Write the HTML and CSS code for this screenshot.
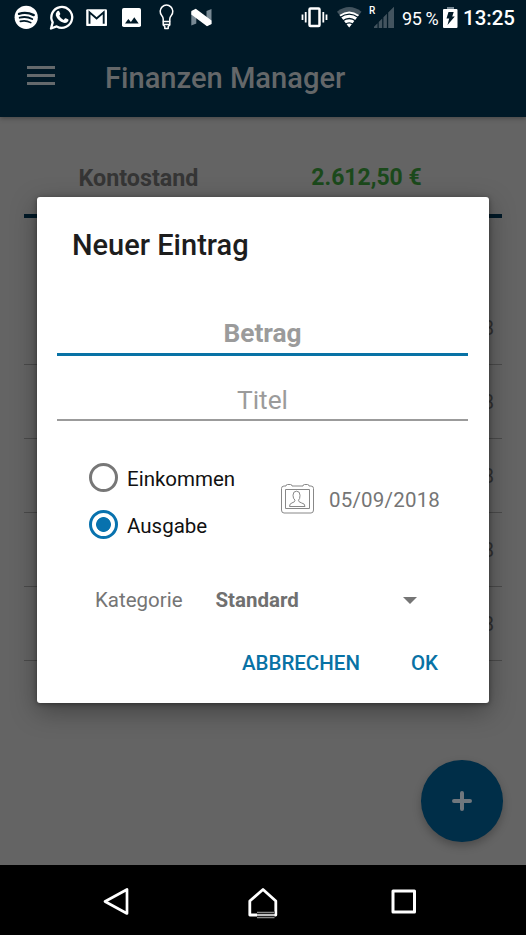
FILE: index.html
```html
<!DOCTYPE html>
<html lang="de">
<head>
<meta charset="utf-8">
<title>Finanzen Manager</title>
<link rel="stylesheet" href="styles.css">
</head>
<body>
<div class="screen">
  <header class="top">
    <div class="status">
      <svg class="notifications" width="220" height="36" viewBox="0 0 220 36">
        <circle cx="26.200" cy="17.300" r="11.600" fill="#fff"/>
        <g fill="none" stroke="#001927" stroke-linecap="round">
          <path d="M19 13.800q7.500-2.300 14.800 1.300" stroke-width="2.300"/>
          <path d="M19.700 17.700q6.500-1.800 12.500 1.300" stroke-width="1.900"/>
          <path d="M20.300 21.400q5.500-1.400 10.500 1.200" stroke-width="1.600"/>
        </g>
        <path d="M51 28.500l1.700-6.100a10.400 10.400 0 1 1 4 4z" fill="none" stroke="#fff" stroke-width="2.300" stroke-linejoin="round"/>
        <path d="M57 11.500q1.500-1.500 2.300 0l1 2.300q.2.700-1 1.900 1.400 3 4.300 4.200l1.500-1.600q.6-.3 2.900.9.800.4.300 1.700-1.500 2.600-4.500 1.900-6-1.800-8-7.300-.5-2.200 1.200-4z" fill="#fff"/>
        <rect x="86.200" y="9.300" width="20.800" height="16.800" rx="1.200" fill="#fff"/>
        <path d="M89.500 23.800V12.300l7.100 6.200 7.100-6.200v11.500" fill="none" stroke="#001927" stroke-width="1.900"/>
        <rect x="122" y="8" width="19" height="19" rx="1.800" fill="#fff"/>
        <path d="M125 23.500l3.300-4.500 2.600 3 3.400-4.700 4.400 6.200z" fill="#001927"/>
        <g fill="none" stroke="#fff" stroke-width="1.500" stroke-linejoin="round">
          <path d="M163.200 21.500v-2.500q0-1.700-1.500-3.500a6.300 6.300 0 1 1 9.600 0q-1.500 1.800-1.500 3.500v2.500z"/>
          <path d="M163.200 21.500v3.500l1.600 1.500v2h3.400v-2l1.600-1.500v-3.500M163.500 24.500h6"/>
        </g>
        <path d="M191.300 12l5 2v9.500l-5 2zM206.500 11l5-2v15l-5 2z" fill="#788994"/>
        <path d="M191.300 11l4.500-2.200 15.700 11.700v3.500l-4.500 2.200-15.700-11.700z" fill="#fff"/>
      </svg>
      <svg class="indicators" width="100" height="36" viewBox="300 0 100 36">
        <rect x="309.500" y="8.600" width="10" height="17.400" rx="1" fill="none" stroke="#fff" stroke-width="2.500"/>
        <path d="M305.700 12v10.500M302.500 14.500v5.500M323.300 12v10.500M326.500 14.500v5.500" stroke="#fff" stroke-width="1.800"/>
        <path d="M349.200 27.500L337 11.700Q349.200 2.500 361.500 11.700z" fill="#43545f"/>
        <path d="M349.200 27.500L339.500 15Q349.200 7.800 359 15z" fill="#fff"/>
        <path d="M340 17.600q9.200-7 18.400 0M342.600 21q6.600-5 13.200 0M345.300 24.300q3.900-3 7.800 0" fill="none" stroke="#001927" stroke-width="1.300"/>
        <text x="369" y="14" class="roaming">R</text>
        <path d="M374 28v-1.200l3.500-3.500V28zM378.700 28v-6l3.500-3.500V28zM383.400 28V17.300l3.500-3.500V28zM388.200 28V12.500l5.800-5.800V28z" fill="#43545f"/>
      </svg>
      <span class="percent">95 %</span>
      <svg class="battery" width="15" height="22" viewBox="0 0 15 22">
        <path d="M4 0h7v3H4z" fill="#788994"/><rect y="2" width="14.500" height="19" rx="1" fill="#fff"/>
        <path d="M5.500 5h5.200L9.200 9.400h2.600L4.500 18l1.700-6.500H3.500z" fill="#001927"/>
      </svg>
      <time class="clock">13:25</time>
    </div>
    <div class="toolbar">
      <div class="menu"><i></i><i></i><i></i></div>
      <h1>Finanzen Manager</h1>
    </div>
  </header>
  <main class="content">
    <div class="balance"><span>Kontostand</span><span class="amount">2.612,50 €</span></div>
    <div class="entries">
      <div class="entry">05/09/2018</div>
      <div class="entry">05/09/2018</div>
      <div class="entry">05/09/2018</div>
      <div class="entry">05/09/2018</div>
      <div class="entry">05/09/2018</div>
    </div>
  </main>
  <nav class="navbar">
    <svg width="27" height="30" viewBox="0 0 27 30"><path d="M2 14.500L24 2.500v24z" fill="none" stroke="#fff" stroke-width="2.700" stroke-linejoin="round"/></svg>
    <svg class="home" width="30" height="32" viewBox="0 0 30 32"><path d="M1.800 28v-14L15 2.500l12.800 11.500v14z" fill="none" stroke="#fff" stroke-width="2.800" stroke-linejoin="round"/><path d="M9 24.500h17.500v7.500H9z" fill="#000"/><path d="M9 25.500h17.500M9 30.500h17.500" stroke="#888" stroke-width="1.600"/><path d="M9 28h19" stroke="#fff" stroke-width="1.500"/></svg>
    <svg width="26" height="26" viewBox="0 0 26 26"><rect x="2" y="2" width="21.500" height="21" fill="none" stroke="#fff" stroke-width="3" stroke-linejoin="round"/></svg>
  </nav>
  <div class="fab"><svg width="20" height="20" viewBox="0 0 20 20"><path d="M10 2v16M2 10h16" stroke="#70777d" stroke-width="4" stroke-linecap="round"/></svg></div>
  <section class="dialog">
    <h2>Neuer Eintrag</h2>
    <div class="field focused">Betrag</div>
    <div class="field">Titel</div>
    <div class="options">
      <div class="radios">
        <div class="radio"><i></i><span>Einkommen</span></div>
        <div class="radio checked"><i></i><span>Ausgabe</span></div>
      </div>
      <div class="date">
        <svg width="34" height="30" viewBox="0 0 34 30" fill="none" stroke="#888" stroke-width="1">
          <path d="M3 2h2q0-1.500 1.500-1.500h3q1.500 0 1.500 1.500h11q0-1.500 1.500-1.500h3q1.500 0 1.500 1.500h2q2.500 0 2.500 2.500V26q0 3-2.500 3H3Q.5 29 .5 26V4.500Q.5 2 3 2z"/>
          <path d="M4.500 5.500h24v19h-24z"/>
          <path d="M8.500 22.500q0-3 2.500-3.600 3-.7 3-2.700-2-1.500-2-5 0-4 3.500-4t3.500 4-1.500 5q0 2 3 2.700 3.500.6 3.500 3.600z"/>
        </svg>
        <span>05/09/2018</span>
      </div>
    </div>
    <div class="category">
      <span class="label">Kategorie</span><strong>Standard</strong><i class="caret"></i>
    </div>
    <div class="actions"><span>ABBRECHEN</span><span>OK</span></div>
  </section>
</div>
</body>
</html>
```
FILE: styles.css
```css
* { box-sizing: border-box; }
body { margin: 0; font-family: Roboto, "Liberation Sans", sans-serif; }
h1, h2 { margin: 0; font-weight: 500; white-space: nowrap; }
svg { display: block; flex: none; }

.screen {
  position: relative;
  width: 526px;
  height: 935px;
  display: flex;
  flex-direction: column;
  background: #646464;
  overflow: hidden;
}

.top { height: 117px; background: #001927; box-shadow: 0 1px 5px rgba(0, 0, 0, .35); }
.status { height: 36px; display: flex; align-items: center; color: #fff; white-space: nowrap; }
.indicators { margin-left: 80px; }
.roaming { font: 500 10px Roboto, sans-serif; fill: #fff; }
.percent { width: 41px; margin-left: 2px; font-size: 18px; letter-spacing: -.4px; }
.battery { margin-top: -1px; }
.clock { margin-left: 5px; font-size: 20.500px; font-weight: 500; }

.toolbar { height: 81px; display: flex; align-items: center; padding: 2px 0 0 27px; gap: 50px; }
.menu { display: grid; gap: 5px; width: 28px; padding-bottom: 4px; }
.menu i { height: 3px; background: #64696c; }
.toolbar h1 { font-size: 29.100px; color: #646769; }

.content { flex: 1; padding: 0 24px; }
.balance {
  height: 101px;
  padding-top: 46px;
  display: grid;
  grid-template-columns: 1fr 1fr;
  text-align: center;
  font-size: 23.300px;
  font-weight: 700;
  line-height: 30px;
  color: #353535;
  border-bottom: 4px solid #001927;
}
.balance > span { padding-right: 10px; }
.balance .amount { font-size: 23px; color: #1b491b; padding-right: 32px; }
.entries { padding-top: 73px; }
.entry {
  height: 74px;
  padding-right: 8px;
  text-align: right;
  font-size: 20px;
  line-height: 75px;
  color: #333;
  border-bottom: 1px solid #4b4b4b;
}

.navbar {
  height: 70px;
  display: flex;
  justify-content: space-between;
  align-items: center;
  padding: 4px 109px 0 103px;
  background: #000;
}
.home { margin: 1px -2px 0 2px; }

.fab {
  position: absolute;
  left: 421px;
  top: 760px;
  width: 81.500px;
  height: 81.500px;
  border-radius: 50%;
  display: grid;
  place-items: center;
  background: #002e48;
  box-shadow: 0 4px 9px rgba(0, 0, 0, .25);
}

.dialog {
  position: absolute;
  left: 36.500px;
  top: 197px;
  width: 452.500px;
  height: 506px;
  padding: 30px 21px 0 20.500px;
  border-radius: 3px;
  background: #fff;
  box-shadow: 0 8px 26px rgba(0, 0, 0, .34), 0 1px 5px rgba(0, 0, 0, .4);
}
.dialog h2 { height: 82px; padding-left: 15px; font-size: 29px; line-height: 36px; color: #1d1d1d; }
.field {
  height: 65px;
  padding-top: 28px;
  font-size: 26.300px;
  line-height: 32px;
  text-align: center;
  color: #9b9b9b;
  border-bottom: 2px solid #9b9b9b;
}
.focused { height: 47px; padding-top: 8px; font-weight: 700; border-bottom: 3px solid #0872a5; }

.options { height: 152px; display: flex; padding: 42px 0 0 32px; }
.radios { width: 192px; }
.radio { height: 47px; display: flex; align-items: flex-start; gap: 9px; font-size: 20.500px; line-height: 32px; color: #111; }
.radio i { width: 29px; height: 29px; border: 3px solid #777; border-radius: 50%; }
.checked i { border-color: #0872ae; background: radial-gradient(circle, #0872ae 7px, #fff 7.800px); }
.date { height: 30px; margin-top: 21px; display: flex; align-items: center; gap: 14px; font-size: 20.500px; line-height: 30px; letter-spacing: .2px; color: #757575; }
.date span { padding-top: 1px; }

.category { height: 54px; display: flex; align-items: center; padding: 0 51px 0 38px; font-size: 20.500px; color: #757575; }
.label { width: 120.500px; }
.category strong { flex: 1; font-weight: 700; color: #707070; }
.caret { border: 7.500px solid transparent; border-top-color: #757575; border-bottom: 0; }

.actions { display: flex; justify-content: flex-end; gap: 51px; padding: 20px 30px 0 0; font-size: 20.500px; font-weight: 500; line-height: 32px; color: #0872a5; }
```
